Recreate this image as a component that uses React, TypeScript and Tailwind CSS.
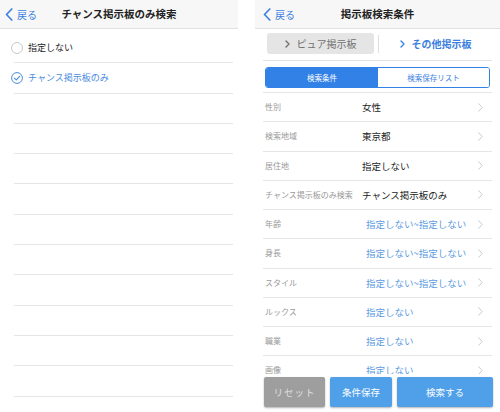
import React from "react";

const font = { fontFamily: '"Noto Sans CJK JP", "Noto Sans", sans-serif' };

type Cond = { label: string; value: string; muted?: boolean };

const conditions: Cond[] = [
  { label: "性別", value: "女性" },
  { label: "検索地域", value: "東京都" },
  { label: "居住地", value: "指定しない" },
  { label: "チャンス掲示板のみ検索", value: "チャンス掲示板のみ" },
  { label: "年齢", value: "指定しない~指定しない", muted: true },
  { label: "身長", value: "指定しない~指定しない", muted: true },
  { label: "スタイル", value: "指定しない~指定しない", muted: true },
  { label: "ルックス", value: "指定しない", muted: true },
  { label: "職業", value: "指定しない", muted: true },
  { label: "画像", value: "指定しない", muted: true },
];

const BackChevron = () => (
  <svg width="8" height="13" viewBox="0 0 8 13" fill="none">
    <path d="M6.8 1L1.5 6.5L6.8 12" stroke="#3d82e0" strokeWidth="1.7" strokeLinecap="round" strokeLinejoin="round" />
  </svg>
);

const RowChevron = () => (
  <svg width="5" height="9" viewBox="0 0 5 9" fill="none">
    <path d="M0.7 0.7L4.2 4.5L0.7 8.3" stroke="#c4c4c4" strokeWidth="0.9" strokeLinecap="round" strokeLinejoin="round" />
  </svg>
);

const TabChevron = ({ color }: { color: string }) => (
  <svg width="5" height="8" viewBox="0 0 5 8" fill="none">
    <path d="M1 1L4 4L1 7" stroke={color} strokeWidth="1.4" strokeLinecap="round" strokeLinejoin="round" />
  </svg>
);

function Header({ title, pad }: { title: string; pad: string }) {
  return (
    <div className="grid h-[29px] grid-cols-[1fr_auto_1fr] items-center border-b border-[#e0e0e0] bg-[#f7f7f7]">
      <div className={`flex items-center gap-[4px] ${pad}`}>
        <BackChevron />
        <span className="text-[10px] text-[#3d82e0]">戻る</span>
      </div>
      <div className="text-[10.5px] font-bold text-[#222]">{title}</div>
      <div />
    </div>
  );
}

function LeftPanel() {
  const empty = Array.from({ length: 10 });
  return (
    <div className="flex w-[238px] shrink-0 flex-col">
      <Header title="チャンス掲示板のみ検索" pad="pl-[5px]" />
      <div className="pt-[4px]">
        <div className="ml-[14px] mr-[5px] flex h-[30.3px] items-center border-b border-[#e6e6e6]">
          <div className="-ml-[3px] flex items-center gap-[5px]">
            <span className="h-[12px] w-[12px] rounded-full border border-[#c9c9c9]" />
            <span className="text-[9px] text-[#222]">指定しない</span>
          </div>
        </div>
        <div className="ml-[14px] mr-[5px] flex h-[30.3px] items-center border-b border-[#e6e6e6]">
          <div className="-ml-[3px] flex items-center gap-[5px]">
            <svg width="12" height="12" viewBox="0 0 12 12" fill="none">
              <circle cx="6" cy="6" r="5.4" stroke="#4a8be0" strokeWidth="1" />
              <path d="M3.4 6.1L5.3 7.9L8.7 4.3" stroke="#4a8be0" strokeWidth="1.1" strokeLinecap="round" strokeLinejoin="round" />
            </svg>
            <span className="text-[9px] text-[#4a8be0]">チャンス掲示板のみ</span>
          </div>
        </div>
        {empty.map((_, i) => (
          <div key={i} className="ml-[14px] mr-[5px] h-[30.3px] border-b border-[#e6e6e6]" />
        ))}
      </div>
    </div>
  );
}

function RightPanel() {
  return (
    <div className="relative flex h-[412px] w-[245px] shrink-0 flex-col overflow-hidden">
      <Header title="掲示板検索条件" pad="pl-[8px]" />

      <div className="mx-[8px] flex items-center border-b border-[#e3e3e3] pb-[6px] pt-[4px]">
        <div className="ml-[4px] flex h-[21px] w-[107px] items-center justify-center gap-[7px] rounded-[3px] bg-[#e5e5e5] text-[10px] text-[#707070]">
          <TabChevron color="#707070" />
          <span>ピュア掲示板</span>
        </div>
        <div className="ml-[4px] h-[18px] w-px bg-[#dedede]" />
        <div className="flex flex-1 items-center justify-center gap-[7px] text-[10px] font-bold text-[#3a80e0]">
          <TabChevron color="#3a80e0" />
          <span>その他掲示板</span>
        </div>
      </div>

      <div className="mx-[10px] mt-[6px] flex h-[21px] overflow-hidden rounded-[3px] border border-[#3281e6]">
        <div className="flex w-[112px] items-center justify-center bg-[#3281e6] text-[7.5px] text-white">検索条件</div>
        <div className="flex flex-1 items-center justify-center bg-white text-[7.5px] text-[#3d7fe0]">検索保存リスト</div>
      </div>

      <div className="mx-[8px] mt-[4px] border-t border-[#e6e6e6]">
        {conditions.map((c) => (
          <div key={c.label} className="flex h-[29.25px] items-center border-b border-[#e6e6e6] pl-[2px] pr-[9px]">
            <span className="w-[97px] shrink-0 text-[8px] text-[#9a9a9a]">{c.label}</span>
            <span
              className={
                c.muted
                  ? "flex-1 pl-[4px] text-[9.5px] text-[#5b9be2]"
                  : "flex-1 text-[9.5px] text-[#1d1d1d]"
              }
            >
              {c.value}
            </span>
            <RowChevron />
          </div>
        ))}
      </div>

      <div className="absolute bottom-0 left-0 right-0 flex h-[38px] gap-[5px] bg-white pl-[9px] pt-[3px]">
        <button className="h-[30px] w-[61px] rounded-[2px] bg-[#9e9e9e] text-[9.5px] tracking-[1px] text-[#dedede] shadow-[0_1px_2px_rgba(0,0,0,0.3)]">
          リセット
        </button>
        <button className="h-[30px] w-[62px] rounded-[2px] bg-[#4f9fe9] text-[9.5px] text-white shadow-[0_1px_2px_rgba(0,0,0,0.3)]">
          条件保存
        </button>
        <button className="h-[30px] w-[96px] rounded-[2px] bg-[#4f9fe9] text-[9.5px] text-white shadow-[0_1px_2px_rgba(0,0,0,0.3)]">
          検索する
        </button>
      </div>
    </div>
  );
}

export default function App() {
  return (
    <div className="flex h-[412px] w-[500px] overflow-hidden bg-white" style={font}>
      <LeftPanel />
      <div className="w-[17px] shrink-0" />
      <RightPanel />
    </div>
  );
}
